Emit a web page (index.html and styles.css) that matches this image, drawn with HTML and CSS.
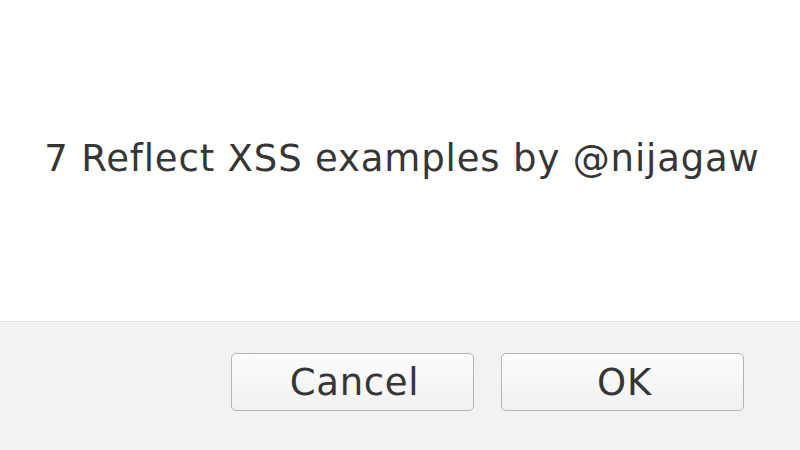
FILE: index.html
```html
<!DOCTYPE html>
<html>
<head>
<meta charset="utf-8">
<link rel="stylesheet" href="styles.css">
</head>
<body>
<div class="dialog">
  <div class="message">
    <p class="text">7 Reflect XSS examples by @nijagaw</p>
  </div>
  <div class="footer">
    <button class="btn">Cancel</button>
    <button class="btn">OK</button>
  </div>
</div>
</body>
</html>
```
FILE: styles.css
```css
html, body {
  margin: 0;
  padding: 0;
  width: 800px;
  height: 450px;
  overflow: hidden;
  background: #ffffff;
  font-family: "DejaVu Sans", sans-serif;
}
.dialog {
  display: flex;
  flex-direction: column;
  height: 450px;
}
.message {
  height: 321px;
  display: flex;
  align-items: center;
  justify-content: center;
  background: #ffffff;
}
.text {
  margin: 0 0 0 4px;
  font-size: 37px;
  letter-spacing: 0.85px;
  color: #363636;
  padding-bottom: 5px;
}
.footer {
  flex: 1;
  background: #f2f2f2;
  border-top: 1px solid #e3e3e3;
  display: flex;
  justify-content: flex-end;
  align-items: flex-start;
  gap: 27px;
  padding: 31px 56px 0 0;
}
.btn {
  width: 243px;
  height: 58px;
  border: 1px solid #b4b4b4;
  border-radius: 5px;
  background: linear-gradient(#fcfcfc, #f1f1f1);
  font-family: "DejaVu Sans", sans-serif;
  font-size: 37px;
  letter-spacing: 0.7px;
  color: #363636;
  padding: 0 0 0 4px;
  box-shadow: inset 0 1px 0 #ffffff;
}
```
